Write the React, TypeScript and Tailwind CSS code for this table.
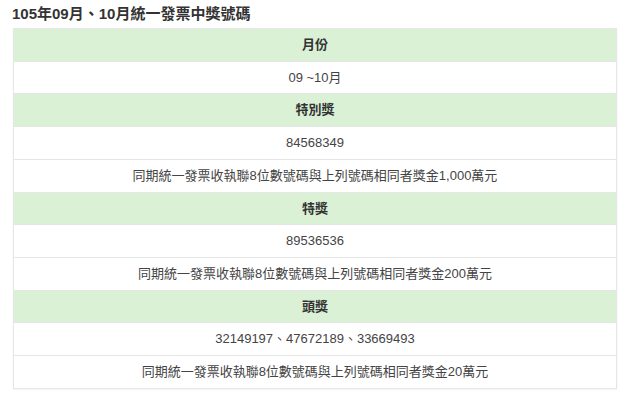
import React from "react";

type Row = { text: string; head?: boolean };

const rows: Row[] = [
  { text: "月份", head: true },
  { text: "09 ~10月" },
  { text: "特別獎", head: true },
  { text: "84568349" },
  { text: "同期統一發票收執聯8位數號碼與上列號碼相同者獎金1,000萬元" },
  { text: "特獎", head: true },
  { text: "89536536" },
  { text: "同期統一發票收執聯8位數號碼與上列號碼相同者獎金200萬元" },
  { text: "頭獎", head: true },
  { text: "32149197、47672189、33669493" },
  { text: "同期統一發票收執聯8位數號碼與上列號碼相同者獎金20萬元" },
];

export default function App() {
  return (
    <div
      className="w-[640px] h-[403px] bg-white text-[#333]"
      style={{ fontFamily: '"Liberation Sans", "Noto Sans CJK TC", sans-serif' }}
    >
      <div className="pt-[5px] pl-[12px] mb-[5px] text-[15px] leading-[18px] font-bold">
        105年09月、10月統一發票中獎號碼
      </div>
      <div className="ml-[13px] w-[604px] border border-[#e6e6e6] shadow-[0_1px_2px_rgba(0,0,0,0.05)]">
        {rows.map((r, i) => (
          <div
            key={i}
            className={`flex justify-center py-[7px] text-[13px] leading-[17.7px] ${
              i > 0 ? "border-t border-[#e6e6e6]" : ""
            } ${r.head ? "bg-[#daf1d6] font-bold text-[#333]" : "bg-white text-[#444]"}`}
          >
            {r.text}
          </div>
        ))}
      </div>
    </div>
  );
}
